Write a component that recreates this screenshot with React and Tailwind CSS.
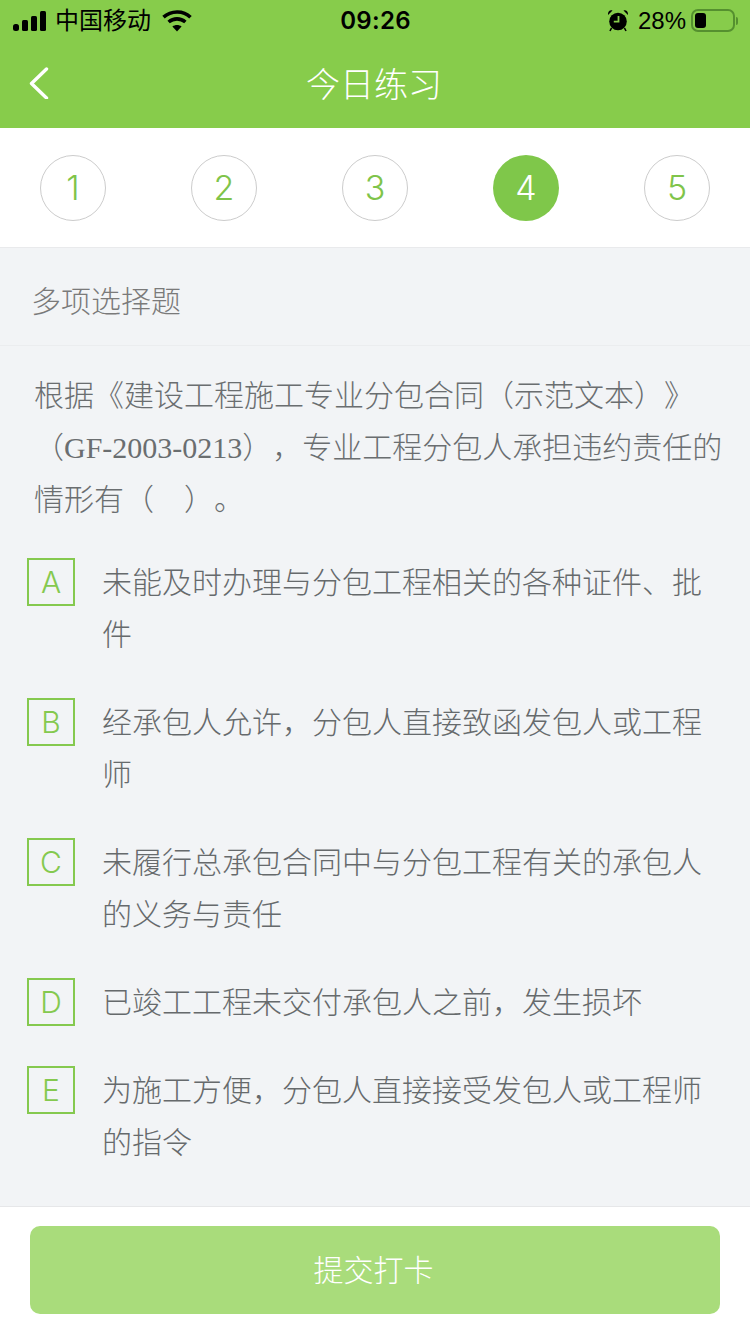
const sans = "font-['Liberation_Sans','Noto_Sans_CJK_SC',sans-serif]";

const options = [
  ["A", "未能及时办理与分包工程相关的各种证件、批件"],
  ["B", "经承包人允许，分包人直接致函发包人或工程师"],
  ["C", "未履行总承包合同中与分包工程有关的承包人的义务与责任"],
  ["D", "已竣工工程未交付承包人之前，发生损坏"],
  ["E", "为施工方便，分包人直接接受发包人或工程师的指令"],
];

function Signal() {
  return (
    <svg width="34" height="20" viewBox="0 0 34 20" fill="#000">
      <rect x="0" y="13" width="6" height="7" rx="2.5" />
      <rect x="9" y="9" width="6" height="11" rx="1.5" />
      <rect x="18" y="5" width="6" height="15" rx="1.5" />
      <rect x="27" y="0" width="6" height="20" rx="1.5" />
    </svg>
  );
}

function Wifi() {
  return (
    <svg width="30" height="22" viewBox="0 0 30 22" fill="none" stroke="#000" strokeWidth="3.6">
      <path d="M1.5 7.2C9 .6 21-.0 28.5 7.2" />
      <path d="M6.6 12C11.5 7.8 18.5 7.8 23.4 12" />
      <path d="M15 21.5 10.4 16.6C13 14.6 17 14.6 19.6 16.6Z" fill="#000" stroke="none" />
    </svg>
  );
}

function Alarm() {
  return (
    <svg width="22" height="23" viewBox="0 0 22 23">
      <circle cx="11" cy="12.5" r="8.8" fill="#000" />
      <path d="M11.5 7v5.6H6.8" fill="none" stroke="#87cc4b" strokeWidth="1.8" />
      <path d="M1 6 5.5 1.6C3 .6.6 2.8 1 6ZM21 6 16.5 1.6C19 .6 21.4 2.8 21 6Z" fill="#000" />
      <path d="M4.5 19 3 22M17.5 19 19 22" stroke="#000" strokeWidth="1.6" />
    </svg>
  );
}

function Battery() {
  return (
    <div className="flex items-center">
      <div className="w-[44px] h-[23px] rounded-[7px] border-2 border-[#55902f] p-[2px] flex">
        <div className="w-[11px] h-full rounded-[3px] bg-black" />
      </div>
      <div className="w-[2px] h-[8px] ml-[1px] rounded-r bg-[#55902f]" />
    </div>
  );
}

export default function App() {
  return (
    <div className={`w-[750px] h-[1334px] flex flex-col bg-[#f2f4f6] overflow-hidden ${sans}`}>
      <div className="h-[128px] shrink-0 bg-[#87cc4b] flex flex-col">
        <div className="h-[40px] flex items-center justify-between pl-[13px] pr-[12px] pt-[1px] text-black">
          <div className="w-[260px] flex items-center">
            <Signal />
            <span className="ml-[8px] text-[24px] leading-[32px]">中国移动</span>
            <span className="ml-[11px]"><Wifi /></span>
          </div>
          <span className="text-[24px] leading-[32px] tracking-[0.3px] font-['Inter','Liberation_Sans',sans-serif] font-semibold">09:26</span>
          <div className="w-[260px] flex items-center justify-end">
            <Alarm />
            <span className="ml-[9px] mr-[5px] text-[24px] leading-[32px]">28%</span>
            <Battery />
          </div>
        </div>
        <div className="h-[88px] flex items-center relative pt-[2px]">
          <svg className="absolute left-[28px] top-[27px]" width="22" height="32" viewBox="0 0 22 32" fill="none" stroke="#fff" strokeWidth="3.4" strokeLinecap="round" strokeLinejoin="round">
            <path d="M18.5 2 3.5 16.5 18.5 31" />
          </svg>
          <div className="w-full text-center text-white text-[34px] leading-[44px] font-light pr-[2px]">今日练习</div>
        </div>
      </div>

      <div className="h-[120px] shrink-0 bg-white border-b border-[#e9eaec] flex items-center justify-between px-[40px]">
        {[1, 2, 3, 4, 5].map((n) => (
          <div
            key={n}
            className={
              n === 4
                ? "w-[66px] h-[66px] rounded-full bg-[#7fc74a] text-white flex items-center justify-center text-[34px] font-['Inter',sans-serif] font-[350]"
                : "w-[66px] h-[66px] rounded-full border border-[#cccccc] text-[#7fc44a] flex items-center justify-center text-[34px] font-['Inter',sans-serif] font-[350]"
            }
          >
            {n}
          </div>
        ))}
      </div>

      <div className="h-[98px] shrink-0 border-b border-[#ebedef] flex items-center pl-[31px] pt-[10px] text-[30px] font-light text-[#7a7a7a]">
        多项选择题
      </div>

      <div className="flex-1 min-h-0">
        <div className="pl-[34px] pr-[24px] pt-[24px] text-[30px] leading-[52px] text-[#6a6e70] [text-spacing-trim:space-all] font-['Liberation_Serif','Noto_Sans_CJK_SC_Light','Noto_Sans_CJK_SC',serif]">
          根据《建设工程施工专业分包合同（示范文本）》（GF-2003-0213），专业工程分包人承担违约责任的情形有（　）。
        </div>
        <div className="mt-[32px] pl-[27px] pr-[46px] flex flex-col gap-[37px]">
          {options.map(([k, t]) => (
            <div key={k} className="flex items-start">
              <div className="w-[48px] h-[48px] shrink-0 border-2 border-[#85c94f] text-[#85c94f] flex items-center justify-center text-[30px] font-['Inter',sans-serif] font-[350]">
                {k}
              </div>
              <div className="ml-[27px] text-[30px] leading-[52px] text-[#666a6c] font-light -mt-[1px]">{t}</div>
            </div>
          ))}
        </div>
      </div>

      <div className="h-[128px] shrink-0 bg-white border-t border-[#e6e7e9] px-[30px] pt-[19px]">
        <div className="h-[88px] rounded-[10px] bg-[#a9dc7b] text-white text-[30px] font-light flex items-center justify-center pr-[3px]">
          提交打卡
        </div>
      </div>
    </div>
  );
}
